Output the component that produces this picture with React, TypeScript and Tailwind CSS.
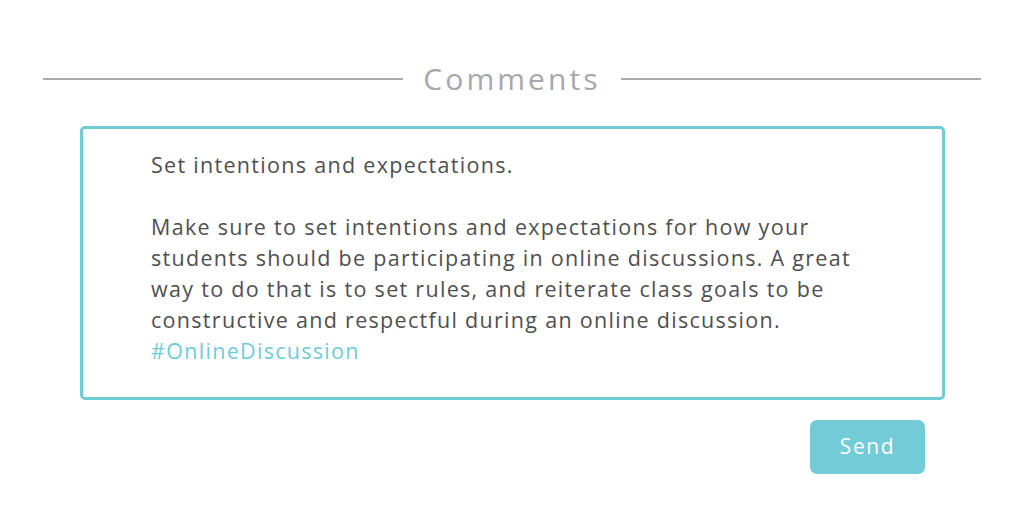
export default function App() {
  return (
    <div
      className="w-[1024px] h-[512px] bg-white pt-[59px]"
      style={{ fontFamily: '"Open Sans", "Noto Sans", sans-serif' }}
    >
      {/* Header */}
      <div className="flex items-center px-[43px]">
        <div className="flex-1 h-[2px] bg-[#a9aaad]" />
        <h1 className="px-[20px] text-[30px] leading-[40px] text-[#a6a8ab] tracking-[3.1px]">Comments</h1>
        <div className="flex-1 h-[2px] bg-[#a9aaad]" />
      </div>

      {/* Comment box */}
      <div className="mt-[27px] ml-[80px] w-[865px] h-[274px] rounded-[5px] border-[3px] border-[#6fcbd6] pl-[68px] pr-[30px] pt-[20px]">
        <div className="text-[21.5px] leading-[31px] text-[#4f4f4f] tracking-[1.3px]">
          <p>Set intentions and expectations.</p>
          <p className="mt-[31px]">
            Make sure to set intentions and expectations for how your
            <br />
            students should be participating in online discussions. A great
            <br />
            way to do that is to set rules, and reiterate class goals to be
            <br />
            constructive and respectful during an online discussion.
          </p>
          <p className="text-[#6fcbd6]">#OnlineDiscussion</p>
        </div>
      </div>

      {/* Actions */}
      <div className="flex justify-end pr-[99px] mt-[20px]">
        <button className="w-[115px] h-[54px] rounded-[7px] bg-[#72cbd6] text-white text-[21px] tracking-[1.6px]">Send</button>
      </div>
    </div>
  );
}
